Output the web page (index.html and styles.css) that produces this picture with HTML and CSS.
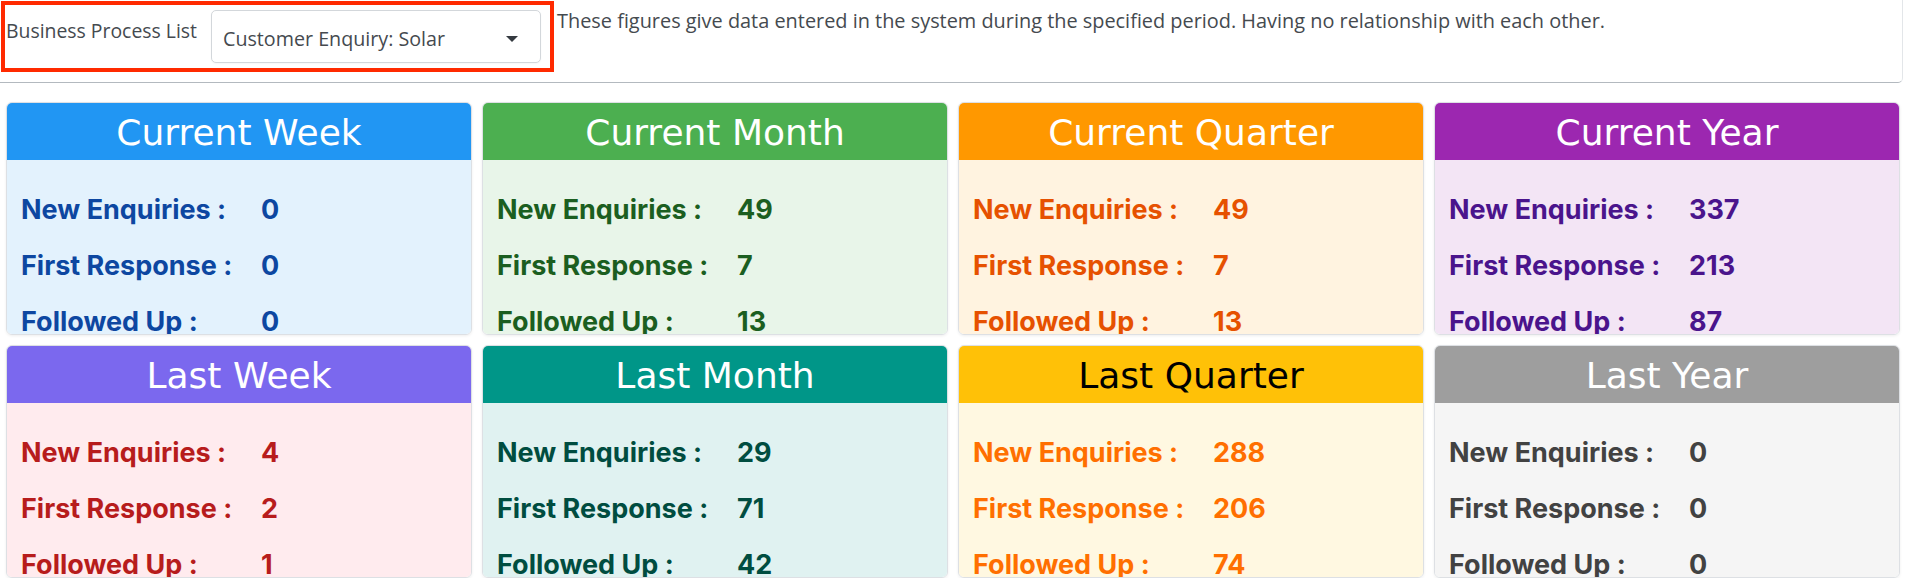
FILE: index.html
```html
<!DOCTYPE html>
<html lang="en">
<head>
    <meta charset="UTF-8">
    <title>Enquiry Dashboard</title>
    <meta name="viewport" content="width=device-width, initial-scale=1.0">
    <link rel="stylesheet" href="styles.css">
</head>
<body>
    <div class="topbar">
        <div class="picker">
            <label for="process">Business Process List</label>
            <div class="select-wrap">
                <select id="process">
                    <option>Customer Enquiry: Solar</option>
                </select>
                <svg class="caret" width="12" height="6" viewBox="0 0 12 6"><path d="M0 0h12L6 6z" fill="#343a40"/></svg>
            </div>
        </div>
        <p class="note">These figures give data entered in the system during the specified period. Having no relationship with each other.</p>
    </div>

    <div id="cards">
        <div class="card week">
            <h2>Current Week</h2>
            <table>
                <tr><td>New Enquiries :</td><td>0</td></tr>
                <tr><td>First Response :</td><td>0</td></tr>
                <tr><td>Followed Up :</td><td>0</td></tr>
            </table>
        </div>
        <div class="card month">
            <h2>Current Month</h2>
            <table>
                <tr><td>New Enquiries :</td><td>49</td></tr>
                <tr><td>First Response :</td><td>7</td></tr>
                <tr><td>Followed Up :</td><td>13</td></tr>
            </table>
        </div>
        <div class="card quarter">
            <h2>Current Quarter</h2>
            <table>
                <tr><td>New Enquiries :</td><td>49</td></tr>
                <tr><td>First Response :</td><td>7</td></tr>
                <tr><td>Followed Up :</td><td>13</td></tr>
            </table>
        </div>
        <div class="card year">
            <h2>Current Year</h2>
            <table>
                <tr><td>New Enquiries :</td><td>337</td></tr>
                <tr><td>First Response :</td><td>213</td></tr>
                <tr><td>Followed Up :</td><td>87</td></tr>
            </table>
        </div>
        <div class="card last-week">
            <h2>Last Week</h2>
            <table>
                <tr><td>New Enquiries :</td><td>4</td></tr>
                <tr><td>First Response :</td><td>2</td></tr>
                <tr><td>Followed Up :</td><td>1</td></tr>
            </table>
        </div>
        <div class="card last-month">
            <h2>Last Month</h2>
            <table>
                <tr><td>New Enquiries :</td><td>29</td></tr>
                <tr><td>First Response :</td><td>71</td></tr>
                <tr><td>Followed Up :</td><td>42</td></tr>
            </table>
        </div>
        <div class="card last-quarter">
            <h2>Last Quarter</h2>
            <table>
                <tr><td>New Enquiries :</td><td>288</td></tr>
                <tr><td>First Response :</td><td>206</td></tr>
                <tr><td>Followed Up :</td><td>74</td></tr>
            </table>
        </div>
        <div class="card last-year">
            <h2>Last Year</h2>
            <table>
                <tr><td>New Enquiries :</td><td>0</td></tr>
                <tr><td>First Response :</td><td>0</td></tr>
                <tr><td>Followed Up :</td><td>0</td></tr>
            </table>
        </div>
    </div>
</body>
</html>
```
FILE: styles.css
```css
* {
    margin: 0;
    padding: 0;
    box-sizing: border-box;
}
body {
    font-family: "Open Sans", "Noto Sans", sans-serif;
    background: #fff;
    overflow: hidden;
}
.topbar {
    display: flex;
    align-items: flex-start;
    height: 83px;
    margin-right: 2px;
    border-bottom: 1px solid #b3b9bf;
    border-right: 1px solid #e3e6e9;
    border-bottom-right-radius: 5px;
}
.picker {
    display: flex;
    align-items: flex-start;
    width: 553px;
    height: 71px;
    margin: 1px 0 0 1px;
    padding: 5px 0 0 1px;
    border: 4px solid #ff2a00;
}
.picker label {
    font-size: 19.4px;
    color: #454a4f;
    padding-top: 7px;
    width: 205px;
}
.select-wrap {
    position: relative;
    width: 330px;
}
select {
    appearance: none;
    -webkit-appearance: none;
    width: 100%;
    height: 53px;
    padding: 4px 36px 0 11px;
    font-family: "Open Sans", "Noto Sans", sans-serif;
    font-size: 19.7px;
    color: #454a4f;
    background: #fff;
    border: 1px solid #d3d7db;
    border-radius: 5px;
    box-shadow: 0 1px 2px rgba(0, 0, 0, 0.04);
}
.caret {
    position: absolute;
    left: 295px;
    top: 26px;
}
.note {
    font-size: 19.9px;
    color: #454a4f;
    padding: 7px 0 0 3px;
    white-space: nowrap;
}
#cards {
    display: grid;
    grid-template-columns: repeat(4, 1fr);
    gap: 10px;
    padding: 19px 5px 0 6px;
}
.card {
    height: 233px;
    border: 1px solid #dde0e4;
    border-radius: 6px;
    overflow: hidden;
    box-shadow: 0 1px 3px rgba(0, 0, 0, 0.07);
}
.card h2 {
    font-family: "DejaVu Sans", sans-serif;
    font-weight: normal;
    font-size: 36px;
    line-height: 53px;
    height: 57px;
    padding-top: 3px;
    text-align: center;
    color: #fff;
}
.card table {
    width: 100%;
    height: 175px;
    display: block;
    padding: 22px 14px 0;
    border-collapse: collapse;
    font-family: Inter, "Liberation Sans", sans-serif;
    font-weight: 700;
    font-size: 27px;
    line-height: 56px;
}
.card td {
    padding: 0;
    white-space: nowrap;
}
.card td:first-child {
    width: 240px;
}

.week h2 { background: #2196f3; }
.week table { background: #e3f2fd; color: #0d47a1; }
.month h2 { background: #4caf50; }
.month table { background: #e8f5e9; color: #1b5e20; }
.quarter h2 { background: #ff9800; }
.quarter table { background: #fff3e0; color: #e65100; }
.year h2 { background: #9c27b0; }
.year table { background: #f3e5f5; color: #4a148c; }
.last-week h2 { background: #7b68ee; }
.last-week table { background: #ffebee; color: #b71c1c; }
.last-month h2 { background: #009688; }
.last-month table { background: #e0f2f1; color: #004d40; }
.last-quarter h2 { background: #ffc107; color: #000; }
.last-quarter table { background: #fff8e1; color: #ff6f00; }
.last-year h2 { background: #9e9e9e; }
.last-year table { background: #f5f5f5; color: #424242; }
```
